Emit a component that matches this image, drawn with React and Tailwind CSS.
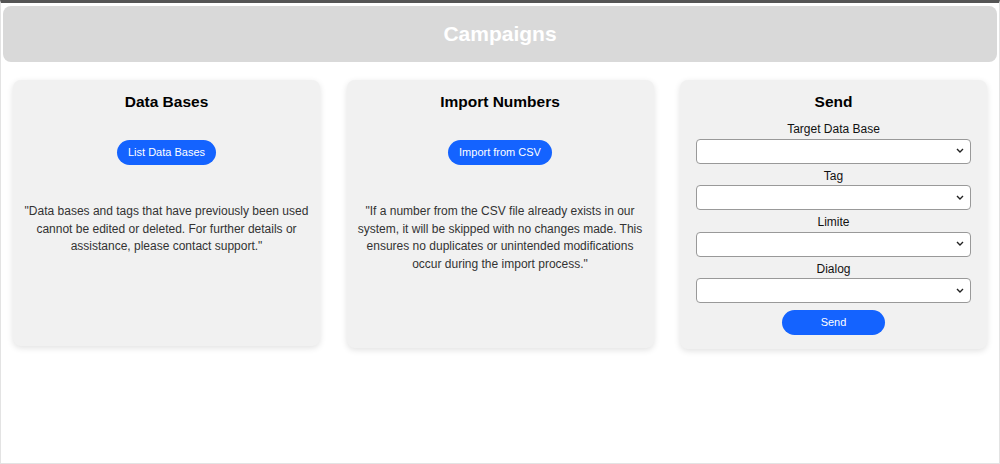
import React from "react";

const font = { fontFamily: '"Liberation Sans", Arial, sans-serif' };

const Card = ({ title, className = "", children }) => (
  <div
    className={`w-[307px] rounded-lg bg-[#f1f1f1] shadow-[0_2px_6px_rgba(0,0,0,0.12)] flex flex-col items-center ${className}`}
  >
    <h2 className="mt-[12px] text-[15.5px] leading-[20px] font-bold text-black">
      {title}
    </h2>
    {children}
  </div>
);

const Field = ({ label }) => (
  <div className="w-[275px] flex flex-col items-center">
    <label className="text-[12px] leading-[15px] text-[#111] mb-[1px]">
      {label}
    </label>
    <div className="relative w-full">
      <select className="w-full h-[25px] appearance-none bg-white border border-[#999] rounded-[4px] text-[12px] px-1">
        <option value=""></option>
      </select>
      <svg
        className="absolute right-[7px] top-[10px] pointer-events-none"
        width="8"
        height="5"
        viewBox="0 0 8 5"
      >
        <path d="M1 1l3 3 3-3" fill="none" stroke="#222" strokeWidth="1.4" />
      </svg>
    </div>
  </div>
);

export default function App() {
  return (
    <div
      style={font}
      className="h-[464px] w-full border-t-[3px] border-t-[#555] border-x border-b border-x-[#e3e3e3] border-b-[#e3e3e3] bg-white px-[2px] pt-[3px]"
    >
      <div className="h-[56px] rounded-lg bg-[#d9d9d9] flex items-center justify-center">
        <h1 className="text-[21px] font-bold text-white">Campaigns</h1>
      </div>
      <div className="flex items-start justify-between px-[10px] mt-[18px]">
        <Card title="Data Bases" className="h-[266px]">
          <button className="mt-[28px] h-[25px] px-[11px] rounded-full bg-[#1463ff] text-white text-[11px]">
            List Data Bases
          </button>
          <p className="mt-[38px] px-[10px] text-center text-[12px] leading-[17.5px] text-[#333]">
            "Data bases and tags that have previously been used cannot be edited
            or deleted. For further details or assistance, please contact
            support."
          </p>
        </Card>
        <Card title="Import Numbers" className="h-[268px]">
          <button className="mt-[28px] h-[25px] px-[11px] rounded-full bg-[#1463ff] text-white text-[11px]">
            Import from CSV
          </button>
          <p className="mt-[38px] px-[9px] text-center text-[12px] leading-[17.5px] text-[#333]">
            "If a number from the CSV file already exists in our system, it will
            be skipped with no changes made. This ensures no duplicates or
            unintended modifications occur during the import process."
          </p>
        </Card>
        <Card title="Send" className="h-[269px]">
          <div className="mt-[10px] flex flex-col items-center gap-[5px]">
            <Field label="Target Data Base" />
            <Field label="Tag" />
            <Field label="Limite" />
            <Field label="Dialog" />
          </div>
          <button className="mt-[7px] h-[25px] w-[103px] rounded-full bg-[#1463ff] text-white text-[11px]">
            Send
          </button>
        </Card>
      </div>
    </div>
  );
}
